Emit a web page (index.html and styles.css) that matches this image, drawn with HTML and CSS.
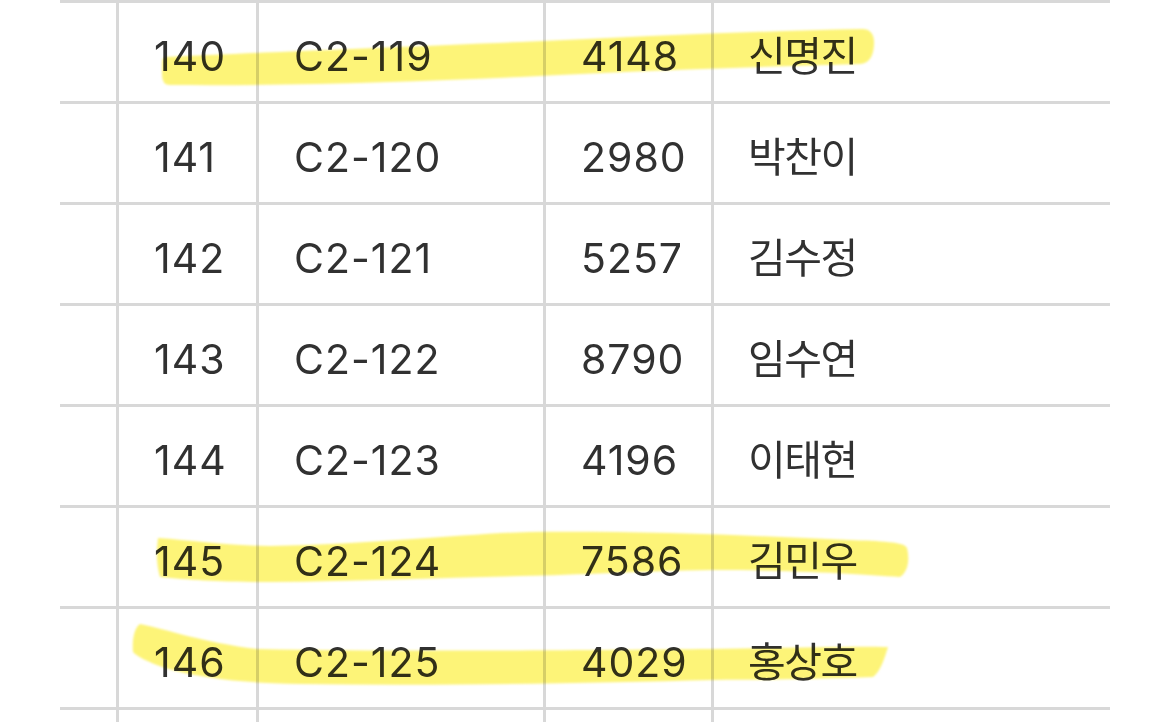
FILE: index.html
```html
<!DOCTYPE html>
<html lang="ko">
<head>
<meta charset="utf-8">
<title>Table</title>
<link rel="stylesheet" href="styles.css">
</head>
<body>
<div class="page">
  <div class="table">
    <div class="row row-partial"><div class="cell c0"></div><div class="cell c1"></div><div class="cell c2"></div><div class="cell c3"></div><div class="cell c4"></div></div>
    <div class="row"><div class="cell c0"></div><div class="cell c1">140</div><div class="cell c2">C2-119</div><div class="cell c3">4148</div><div class="cell c4 name">신명진</div></div>
    <div class="row"><div class="cell c0"></div><div class="cell c1">141</div><div class="cell c2">C2-120</div><div class="cell c3">2980</div><div class="cell c4 name">박찬이</div></div>
    <div class="row"><div class="cell c0"></div><div class="cell c1">142</div><div class="cell c2">C2-121</div><div class="cell c3">5257</div><div class="cell c4 name">김수정</div></div>
    <div class="row"><div class="cell c0"></div><div class="cell c1">143</div><div class="cell c2">C2-122</div><div class="cell c3">8790</div><div class="cell c4 name">임수연</div></div>
    <div class="row"><div class="cell c0"></div><div class="cell c1">144</div><div class="cell c2">C2-123</div><div class="cell c3">4196</div><div class="cell c4 name">이태현</div></div>
    <div class="row"><div class="cell c0"></div><div class="cell c1">145</div><div class="cell c2">C2-124</div><div class="cell c3">7586</div><div class="cell c4 name">김민우</div></div>
    <div class="row"><div class="cell c0"></div><div class="cell c1">146</div><div class="cell c2">C2-125</div><div class="cell c3">4029</div><div class="cell c4 name">홍상호</div></div>
    <div class="row row-partial"><div class="cell c0"></div><div class="cell c1"></div><div class="cell c2"></div><div class="cell c3"></div><div class="cell c4"></div></div>
  </div>
  <svg class="marks" width="1170" height="722" viewBox="0 0 1170 722" aria-hidden="true">
    <defs>
      <filter id="soft" x="-5%" y="-20%" width="110%" height="140%">
        <feGaussianBlur stdDeviation="1.1"/>
      </filter>
    </defs>
    <g fill="#fdf478" filter="url(#soft)">
      <path d="M166,57 C 250,53 400,47 520,42 C 650,36 760,31 862,29 Q 875,29 874,45 Q 873,63 860,64 C 760,67 650,70 520,77 C 400,82 300,86 170,85 Q 162,85 162,75 L 162,63 Q 162,57 166,57 Z"/>
      <path d="M158,538 C 190,540 230,546 270,546 C 380,544 460,534 530,532 C 650,531 760,536 850,540 C 880,541 905,542 907,548 C 910,560 908,572 900,577 C 860,574 790,570 713,570 C 640,571 580,575 520,576 C 440,578 360,581 270,582 C 220,582 190,580 160,577 Q 155,560 158,538 Z"/>
      <path d="M140,624 C 170,630 200,642 257,649 C 400,652 600,650 713,649 C 790,648 850,646 888,647 C 884,660 880,672 873,677 C 820,679 760,680 713,680 C 600,683 450,686 300,684 C 240,683 200,678 165,668 C 148,662 138,657 133,652 C 132,640 134,628 140,624 Z"/>
    </g>
  </svg>
</div>
</body>
</html>
```

FILE: styles.css
```css
html, body {
  margin: 0;
  padding: 0;
  background: #ffffff;
}

.page {
  position: relative;
  width: 1170px;
  height: 722px;
  overflow: hidden;
  background: #ffffff;
}

.table {
  display: flex;
  flex-direction: column;
  margin-top: -98px;
  margin-left: 60px;
  width: 1050px;
}

.row {
  display: flex;
  height: 98px;
  border-bottom: 3px solid #d8d8d8;
}

.cell {
  box-sizing: border-box;
  height: 101px;
  margin-bottom: -3px;
  padding-top: 6px;
  padding-left: 35px;
  font-family: "Inter", "Noto Sans CJK KR", sans-serif;
  font-size: 41px;
  letter-spacing: 1px;
  line-height: 95px;
  color: #313131;
  white-space: nowrap;
}

.c0 { width: 56px; padding-left: 0; }
.c1 { width: 140px; border-left: 3px solid #d8d8d8; }
.c2 { width: 287px; border-left: 3px solid #d8d8d8; }
.c3 { width: 168px; border-left: 3px solid #d8d8d8; }
.c4 { width: 399px; border-left: 3px solid #d8d8d8; }

.name {
  padding-left: 34px;
  letter-spacing: -1.5px;
}

.marks {
  position: absolute;
  left: 0;
  top: 0;
  pointer-events: none;
  mix-blend-mode: multiply;
}
```
